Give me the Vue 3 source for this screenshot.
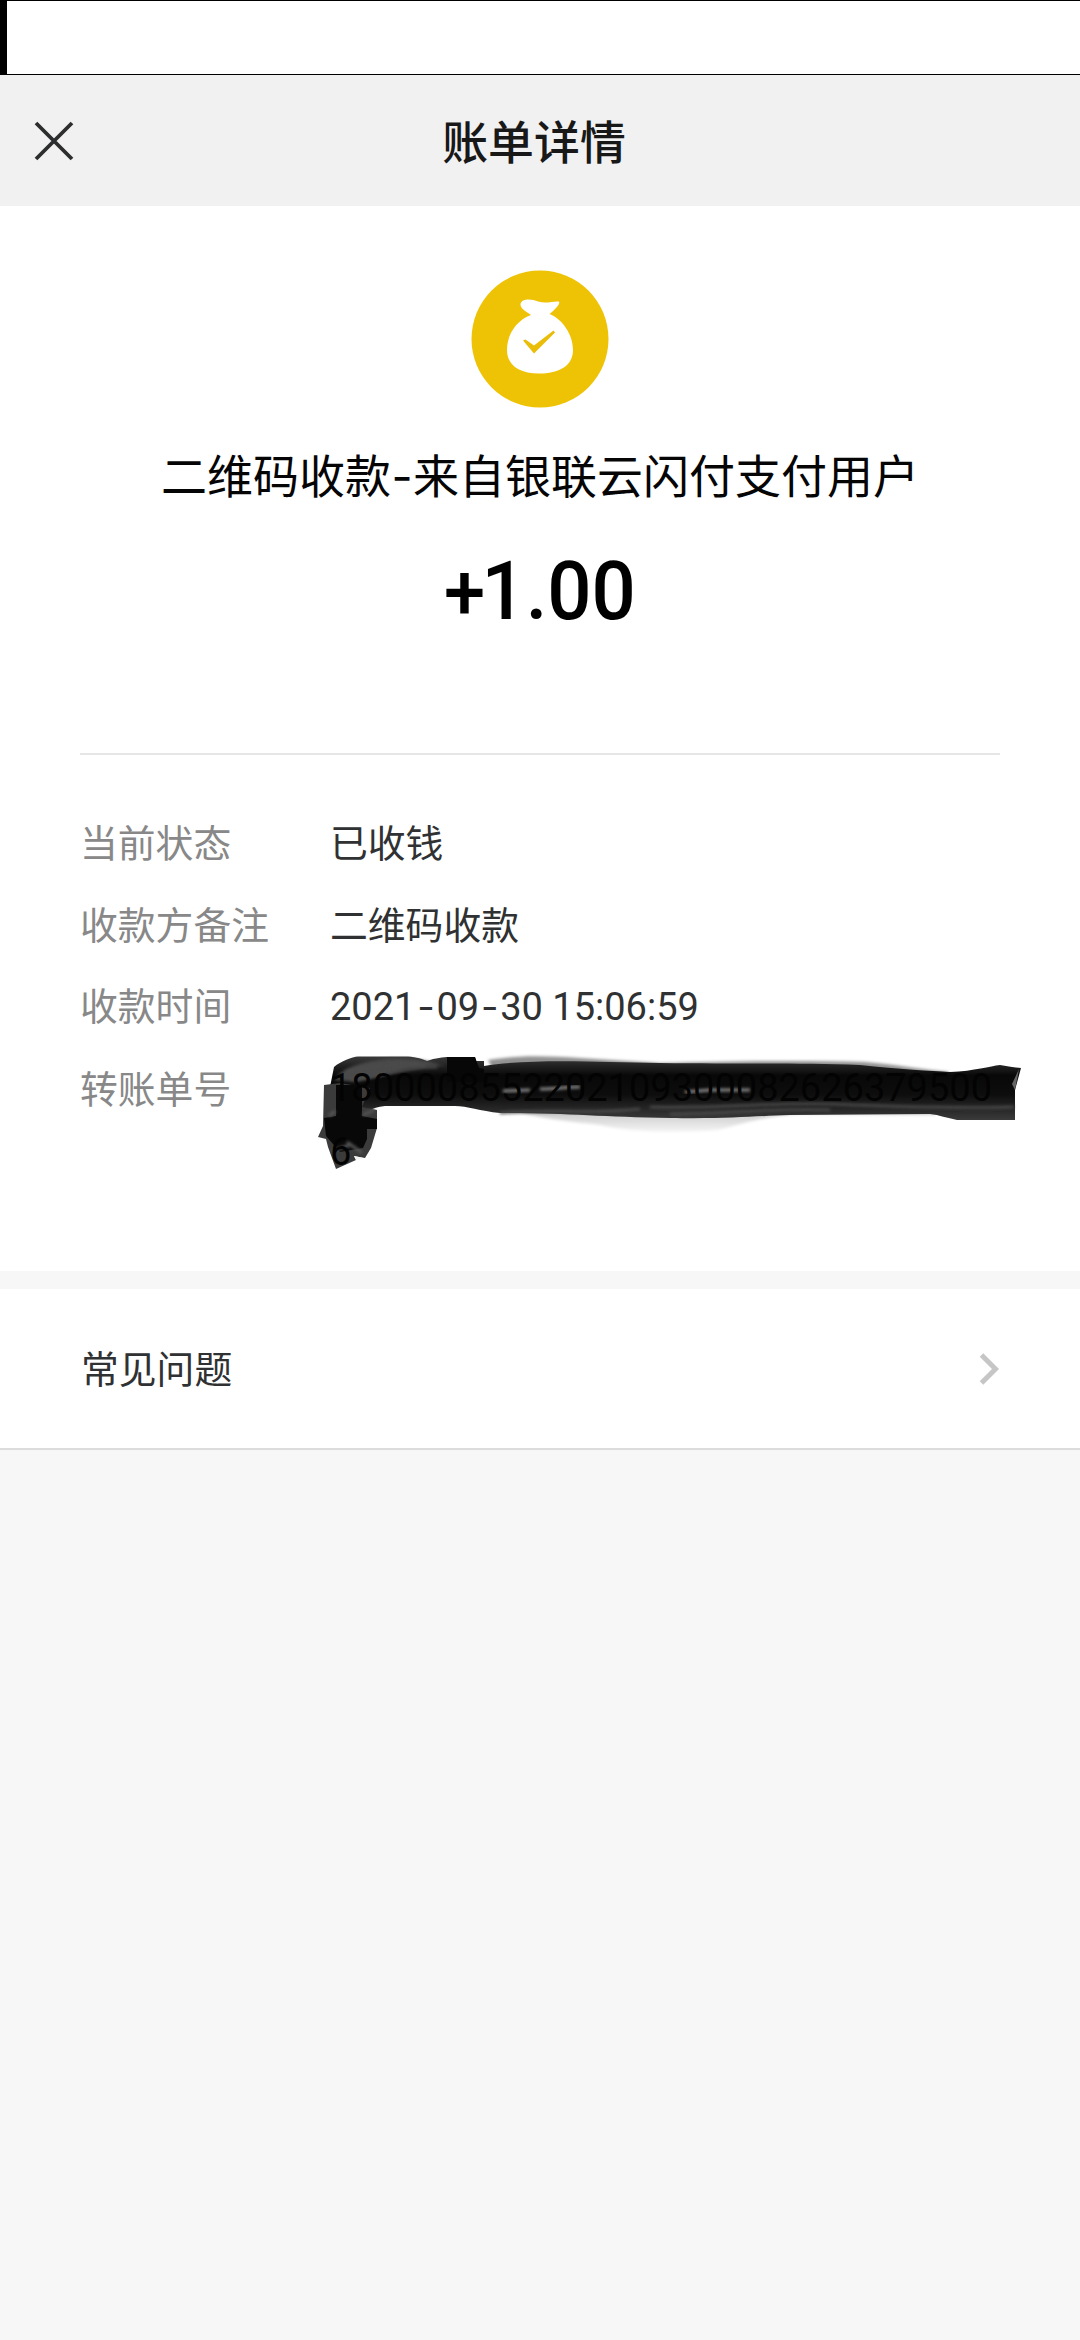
<script setup>
const subtitle = '二维码收款-来自银联云闪付支付用户'.split('-')
const dateParts = '2021-09-30 15:06:59'.split('-')
</script>

<template>
  <div class="screen">
    <div class="status"></div>
    <header class="nav">
      <svg class="close" width="40" height="40" viewBox="0 0 40 40">
        <path d="M2 2 38 38M38 2 2 38" fill="none" stroke="#2b2d2e" stroke-width="3.8" />
      </svg>
      <h1>账单详情</h1>
    </header>

    <main class="bill">
      <svg class="logo" width="138" height="138" viewBox="0 0 138 138">
        <circle cx="69" cy="69" r="68.5" fill="#eec205" />
        <path
          d="M60 45C54 41 49 38 49.500 34C51 28 61 29 67 31.500C75 34 82 31 87.500 31.500C91 33 82 41 78.500 44C91 49 102 64 102 80C102 96 88 103.500 68 103.500C48 103.500 36 95 36 80C36 64 46 50 60 45Z"
          fill="#fff"
        />
        <path d="M52 70.500 54.500 69.500 63 75.500 82.500 60.500 84 62.500 63 83.500Z" fill="#e9bd08" />
      </svg>
      <p class="subtitle">{{ subtitle[0] }}<span class="dash">-</span>{{ subtitle[1] }}</p>
      <p class="amount"><span class="plus">+</span>1.00</p>

      <dl class="details">
        <div class="row">
          <dt>当前状态</dt>
          <dd>已收钱</dd>
        </div>
        <div class="row">
          <dt>收款方备注</dt>
          <dd>二维码收款</dd>
        </div>
        <div class="row">
          <dt>收款时间</dt>
          <dd class="num">{{ dateParts[0] }}<span class="dash">-</span>{{ dateParts[1] }}<span class="dash">-</span>{{ dateParts[2] }}</dd>
        </div>
        <div class="row">
          <dt>转账单号</dt>
          <dd class="num serial">
            <svg class="marker" width="710" height="125" viewBox="315 1050 710 125">
              <defs>
                <linearGradient id="ink" x1="0" y1="0" x2="0" y2="1">
                  <stop offset="0" stop-color="#3a3a3a" />
                  <stop offset=".3" stop-color="#080808" />
                  <stop offset=".6" stop-color="#0d0d0d" />
                  <stop offset="1" stop-color="#3a3a3a" />
                </linearGradient>
                <linearGradient id="haze" x1="0" y1="0" x2="0" y2="1">
                  <stop offset="0" stop-color="#bbb" />
                  <stop offset="1" stop-color="#f4f4f4" />
                </linearGradient>
                <filter id="soft" x="-10%" y="-40%" width="120%" height="180%">
                  <feGaussianBlur stdDeviation="1.5" />
                </filter>
              </defs>
              <path d="M500 1108C540 1119 565 1121 600 1125C640 1134 690 1132 718 1130C745 1123 765 1116 800 1114L935 1115V1105Z" fill="url(#haze)" filter="url(#soft)" />
              <path d="M488 1060C520 1055 545 1056 580 1058L660 1063C740 1061 800 1060 865 1062C900 1065 925 1070 950 1072L920 1083H500Z" fill="#939393" filter="url(#soft)" />
              <path d="M330 1087 334 1067C341 1061 352 1057 358 1056.500H405C414 1056.500 420 1058 427 1061C435 1058 444 1057 448 1057H475L476 1061H484V1066C520 1060 570 1061 610 1062L660 1063C740 1064 800 1063 860 1065C900 1069 930 1071 950 1072C975 1071 990 1066 1000 1065L1012 1067 1021 1068 1015 1090V1120H957C947 1118 939 1115 930 1114L790 1115C755 1116 730 1119 670 1118C600 1117 570 1113 500 1113C480 1111 467 1106 455 1106H385C370 1108 367 1112 360 1116L330 1110Z" fill="url(#ink)" />
              <path d="M334 1080C345 1062 390 1054 427 1061L445 1066C410 1064 375 1080 355 1082Z" fill="#484848" filter="url(#soft)" />
              <path d="M350 1079C380 1077 410 1066 437 1067M500 1113C550 1108 590 1115 640 1109M650 1107C730 1109 770 1102 830 1104S930 1109 1014 1107M345 1072C375 1067 395 1062 425 1065M670 1114C720 1114 770 1108 830 1110" fill="none" stroke="#4b4b4b" stroke-width="2.500" filter="url(#soft)" />
              <path d="M503 1091 530 1090M540 1089C555 1089 566 1087 580 1087M685 1092 710 1090H750" fill="none" stroke="#858585" stroke-width="3" filter="url(#soft)" />
              <path d="M447 1057H475L479 1068 484 1069V1082H447Z" fill="#070707" />
              <path d="M324 1085 340 1083 370 1088 362 1107 377 1110V1128L371 1148 365 1158 354 1156 356 1160 336 1169 328 1147 326 1139 318 1137 323 1126Z" fill="#3b3b3b" />
              <path d="M336 1085H362V1116L377 1119V1129H367V1139L363 1148 340 1152 326 1136 324 1118 336 1116Z" fill="#080808" />
              <path d="M363 1115 374 1110M347 1142 362 1153M332 1151 350 1145M329 1116 335 1111" fill="none" stroke="#555" stroke-width="3" filter="url(#soft)" />
              <path d="M354 1156 363 1158 356 1160Z" fill="#f4f4f4" />
              <path d="M1012 1084 1019 1069 1015 1090Z" fill="#666" />
            </svg>
            <span class="digits">1800008552202109300082626379500<br />6</span>
          </dd>
        </div>
      </dl>
    </main>

    <section class="faq">
      <span class="faq-label">常见问题</span>
      <svg width="20" height="32" viewBox="0 0 20 32">
        <path d="M2.500 2 16.500 16 2.500 30" fill="none" stroke="#c6c6c6" stroke-width="5" />
      </svg>
    </section>
  </div>
</template>

<style>
body {
  background: #f7f7f7;
}
</style>

<style scoped>
.screen {
  width: 1080px;
  height: 2340px;
  overflow: hidden;
  background: #f7f7f7;
  font-family: 'Noto Sans CJK SC', sans-serif;
  color: #303132;
}
h1, p, dl, dd {
  margin: 0;
}
.status {
  box-sizing: border-box;
  height: 75px;
  background: #fff;
  border: solid #000;
  border-width: 1px 0 1px 7px;
}
.nav {
  height: 131px;
  background: #f1f1f1;
  display: grid;
  grid-template-columns: 1fr auto 1fr;
  align-items: center;
}
.close {
  margin-left: 34px;
}
h1 {
  font-size: 45.9px;
  line-height: 60px;
  font-weight: 500;
  color: #181818;
  margin-right: 12px;
  transform: translateY(-2px);
}
.bill {
  box-sizing: border-box;
  height: 1065px;
  padding: 64px 80px 0;
  background: #fff;
  display: flex;
  flex-direction: column;
  align-items: center;
}
.logo {
  display: block;
}
.subtitle {
  margin-top: 33px;
  font-size: 46px;
  line-height: 64px;
  color: #050505;
  white-space: nowrap;
}
.dash {
  display: inline-block;
  width: 22px;
  text-align: center;
  font-family: Inter, sans-serif;
}
.amount {
  margin-top: 33px;
  height: 100px;
  font-family: Roboto, sans-serif;
  font-size: 82px;
  line-height: 100px;
  font-weight: 500;
  color: #000;
  white-space: nowrap;
  transform: scaleX(.95);
}
.plus {
  font-size: 78px;
  margin-right: -4px;
}
.details {
  box-sizing: border-box;
  align-self: stretch;
  margin-top: 112px;
  padding-top: 54px;
  border-top: 2px solid #e6e6e6;
  display: flex;
  flex-direction: column;
  gap: 17.5px;
}
.row {
  display: flex;
  font-size: 37.8px;
  line-height: 64px;
}
dt {
  width: 250px;
  flex: none;
  color: #888;
}
.num {
  font-family: Roboto, 'Noto Sans CJK SC', sans-serif;
  font-size: 38px;
  white-space: pre;
  position: relative;
  top: 1.5px;
}
.num .dash {
  width: 21px;
}
.serial {
  white-space: nowrap;
}
.marker {
  position: absolute;
  left: -15px;
  top: -6.5px;
}
.digits {
  position: relative;
  color: #030303;
}
.faq {
  box-sizing: border-box;
  height: 161px;
  margin-top: 18px;
  padding: 0 81px;
  background: #fff;
  border-bottom: 2px solid #dcdcdc;
  display: flex;
  align-items: center;
  justify-content: space-between;
  font-size: 37.8px;
}
.faq-label {
  padding-bottom: 4px;
}
</style>
